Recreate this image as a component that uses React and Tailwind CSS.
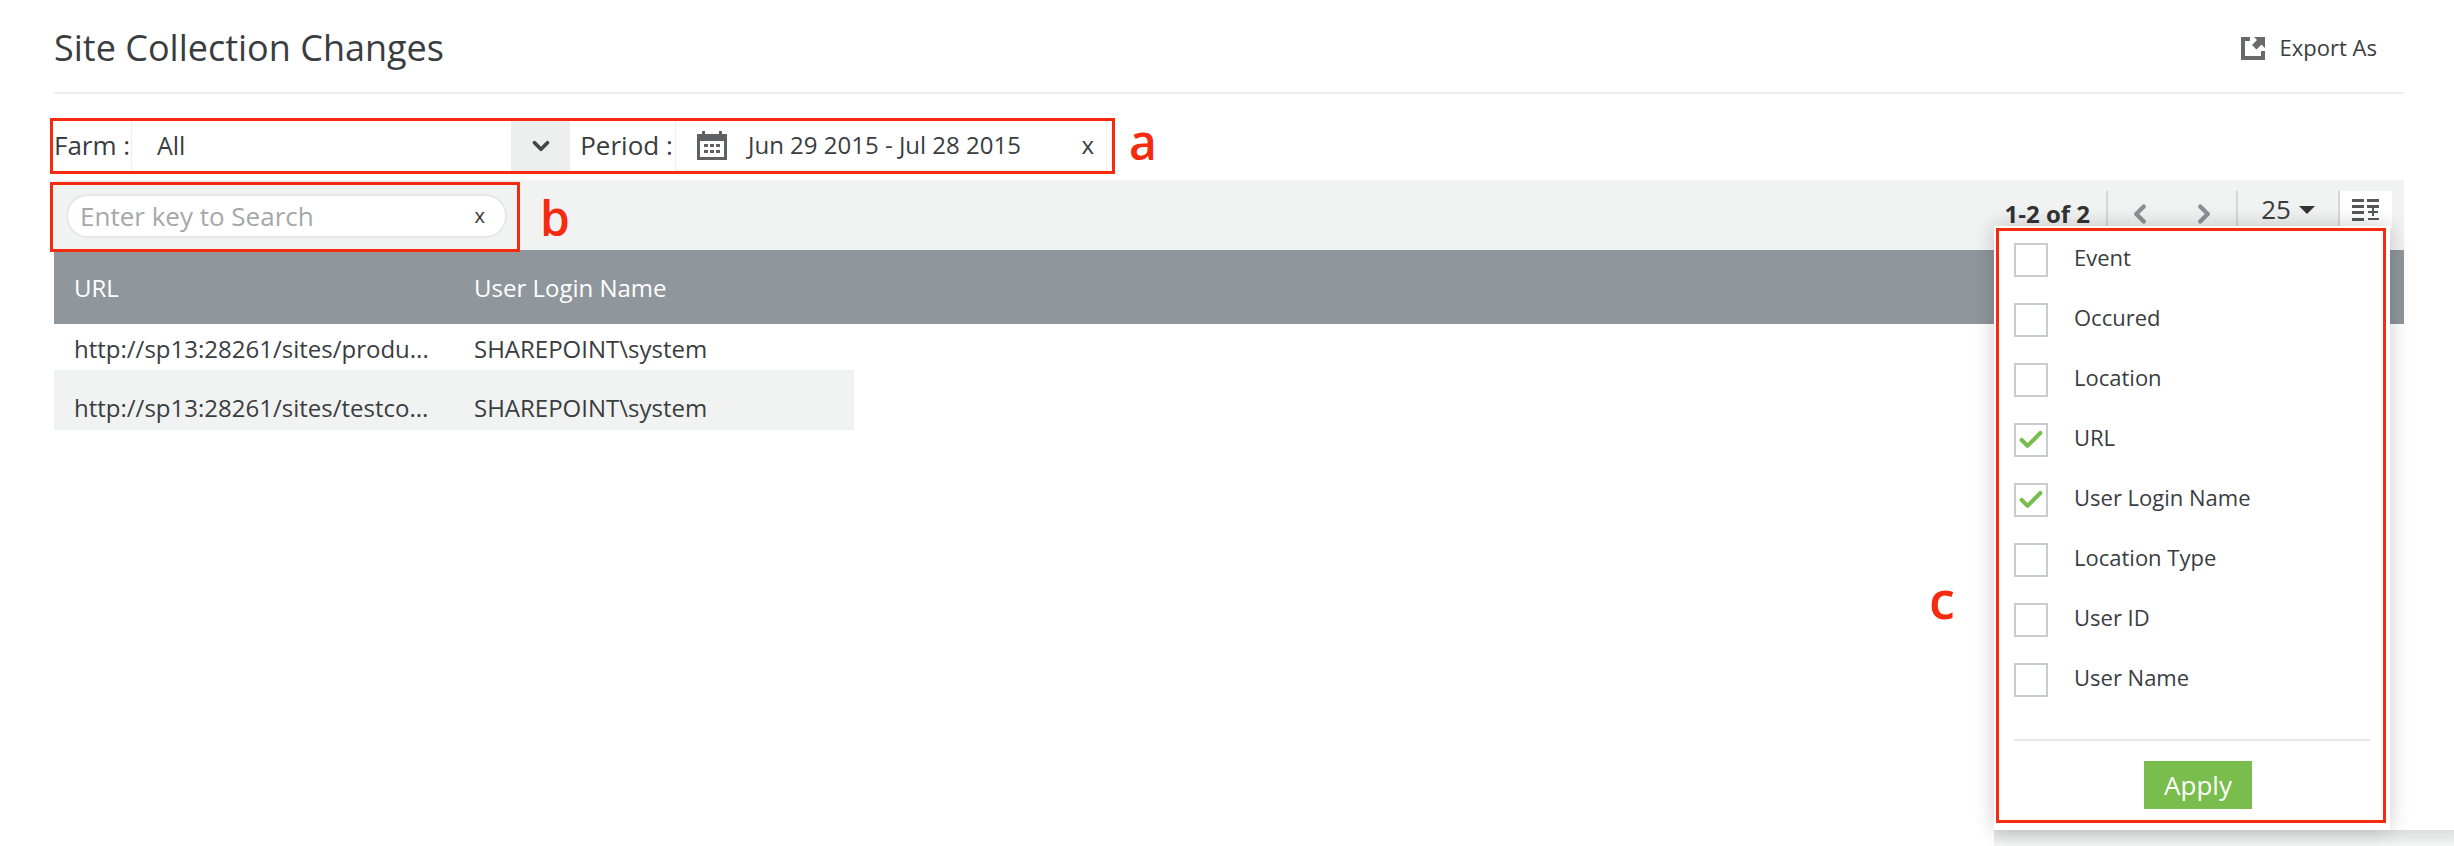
import { ChevronDown, ChevronLeft, ChevronRight, Check } from 'lucide-react'

const columns = [
  { label: 'Event' },
  { label: 'Occured' },
  { label: 'Location' },
  { label: 'URL', checked: true },
  { label: 'User Login Name', checked: true },
  { label: 'Location Type' },
  { label: 'User ID' },
  { label: 'User Name' },
]

const rows = [
  { url: 'http://sp13:28261/sites/produ...', user: 'SHAREPOINT\\system' },
  { url: 'http://sp13:28261/sites/testco...', user: 'SHAREPOINT\\system' },
]

function ExportIcon() {
  return (
    <svg width="26" height="26" viewBox="0 0 26 26" fill="#666a6d">
      <path d="M1 2h9v4H5v15h16v-5h4v9H1z" />
      <path d="M14 2h11v11l-3.500-3.500-5 5-4.500-4.500 5-5z" />
    </svg>
  )
}

function CalendarIcon() {
  return (
    <svg width="32" height="30" viewBox="0 0 32 30" fill="#5f6265">
      <path d="M1 4h5V1h3v3h14V1h3v3h5v26H1zM4 11v16h24V11z" />
      <path d="M8 14h4v3H8zM14 14h4v3h-4zM20 14h4v3h-4zM8 20h4v3H8zM14 20h4v3h-4zM20 20h4v3h-4z" />
    </svg>
  )
}

function ColumnsIcon() {
  return (
    <svg width="28" height="24" viewBox="0 0 28 24" fill="#55585b">
      <path d="M0 1h12v3H0zM15 1h12v3H15zM0 7h12v3H0zM0 13h12v3H0zM0 20h12v3H0zM15 7h12v3H15z" />
      <path d="M20 10h2v3h4v2h-4v3h-2v-3h-4v-2h4zM16 20h11v2H16z" />
    </svg>
  )
}

export default function App() {
  return (
    <div className="relative h-[846px] w-[2454px] overflow-hidden bg-white font-['Open_Sans',sans-serif] text-[#3a3d3f]">
      <div className="px-[50px]">
        {/* Title bar */}
        <div className="ml-[4px] flex h-[94px] items-center justify-between border-b-2 border-[#eeeeee] pt-[3px]">
          <h1 className="text-[36px] font-normal leading-none">Site Collection Changes</h1>
          <div className="mr-[27px] flex items-center gap-[14px] text-[22px]">
            <ExportIcon />
            Export As
          </div>
        </div>

        {/* Filters */}
        <div className="ml-[4px] mt-[26px] flex h-[52px] items-stretch text-[26px]">
          <span className="flex w-[77px] items-center pb-[2px]">Farm :</span>
          <div className="flex w-[381px] items-center border-x border-[#eeeeee] pl-[25px] text-[25px]">All</div>
          <div className="flex w-[58px] items-center justify-center bg-[#edefef]">
            <ChevronDown size={26} strokeWidth={3.5} color="#44474a" />
          </div>
          <span className="flex w-[105px] items-center justify-center pb-[2px] pl-[8px]">Period :</span>
          <div className="flex w-[432px] items-center border-x border-b-2 border-[#eeeeee] pl-[20px] text-[24px]">
            <CalendarIcon />
            <span className="ml-[20px]">Jun 29 2015 - Jul 28 2015</span>
            <span className="ml-auto mr-[12px]">x</span>
          </div>
        </div>

        {/* Toolbar */}
        <div className="ml-[4px] mt-[8px] flex h-[70px] items-start justify-between bg-[#f1f3f3]">
          <div className="ml-[12px] mt-[14px] flex h-[44px] w-[441px] items-center justify-between rounded-full border-2 border-[#e6e8e8] bg-white pl-[12px] pr-[20px] text-[26px] text-[#a5a8aa]">
            Enter key to Search
            <span className="text-[20px] font-medium text-[#333333]">x</span>
          </div>
          <div className="mr-[12px] mt-[11px] flex h-[37px] items-stretch">
            <span className="mt-[8px] flex items-center pr-[16px] text-[24px] font-bold text-[#333333]">1-2 of 2</span>
            <div className="flex w-[130px] items-center justify-around border-l-2 border-[#d5d7d7] pt-[8px]">
              <ChevronLeft size={30} strokeWidth={3.5} color="#8a9095" />
              <ChevronRight size={30} strokeWidth={3.5} color="#8a9095" />
            </div>
            <div className="flex w-[102px] items-center justify-center gap-[8px] border-l-2 border-[#d5d7d7] text-[26px]">
              25
              <span className="h-0 w-0 border-x-[8px] border-t-[8px] border-x-transparent border-t-[#333333]" />
            </div>
            <div className="flex w-[54px] items-center justify-center border-l-2 border-[#d5d7d7] bg-white">
              <ColumnsIcon />
            </div>
          </div>
        </div>

        {/* Table */}
        <div className="ml-[4px] flex h-[74px] items-center bg-[#8f969c] pt-[2px] text-[24px] text-white">
          <span className="w-[420px] pl-[20px]">URL</span>
          <span>User Login Name</span>
        </div>
        <div className="ml-[4px] w-[800px] text-[24px]">
          {rows.map((row, i) => (
            <div key={row.url} className={i % 2 ? 'flex h-[60px] items-center bg-[#f1f3f3] pt-[16px]' : 'flex h-[46px] items-center pt-[4px]'}>
              <span className="w-[420px] pl-[20px]">{row.url}</span>
              <span>{row.user}</span>
            </div>
          ))}
        </div>
      </div>

      {/* Page shadow running under the popover to the right edge */}
      <div className="absolute left-[1994px] right-0 top-[830px] h-[16px] bg-linear-to-b from-[#dcdfdf] to-[#f4f5f5]" />

      {/* Column chooser popover */}
      <div className="absolute left-[1994px] top-[226px] flex h-[604px] w-[396px] flex-col bg-white pl-[20px] pr-[20px] pt-[17px] shadow-[0_0_20px_rgba(0,0,0,0.2)]">
        <div className="flex flex-col gap-[26px]">
          {columns.map((col) => (
            <label key={col.label} className="flex h-[34px] items-center text-[22px]">
              <span className="flex h-[34px] w-[34px] items-center justify-center border-2 border-[#c9cccc] bg-white">
                {col.checked && <Check size={28} strokeWidth={3.5} color="#79bd4d" />}
              </span>
              <span className="ml-[26px] -mt-[6px]">{col.label}</span>
            </label>
          ))}
        </div>
        <div className="mt-[42px] border-t-2 border-[#e6eaea]" />
        <button type="button" className="ml-[130px] mt-[20px] h-[48px] w-[108px] bg-[#79bd4d] text-[26px] font-medium text-white">
          Apply
        </button>
      </div>

      {/* Red annotations from the original document */}
      <div className="absolute left-[50px] top-[118px] h-[56px] w-[1065px] border-[3px] border-[#f52a0e]" />
      <div className="absolute left-[50px] top-[182px] h-[70px] w-[470px] border-[3px] border-[#f52a0e]" />
      <div className="absolute left-[1996px] top-[228px] h-[595px] w-[390px] border-[3px] border-[#f52a0e]" />
      <span className="absolute left-[1129px] top-[118px] text-[48px] font-semibold leading-none text-[#f52a0e]">a</span>
      <span className="absolute left-[540px] top-[194px] text-[48px] font-semibold leading-none text-[#f52a0e]">b</span>
      <span className="absolute left-[1929px] top-[573px] text-[52px] font-semibold leading-none text-[#f52a0e]">c</span>
    </div>
  )
}
